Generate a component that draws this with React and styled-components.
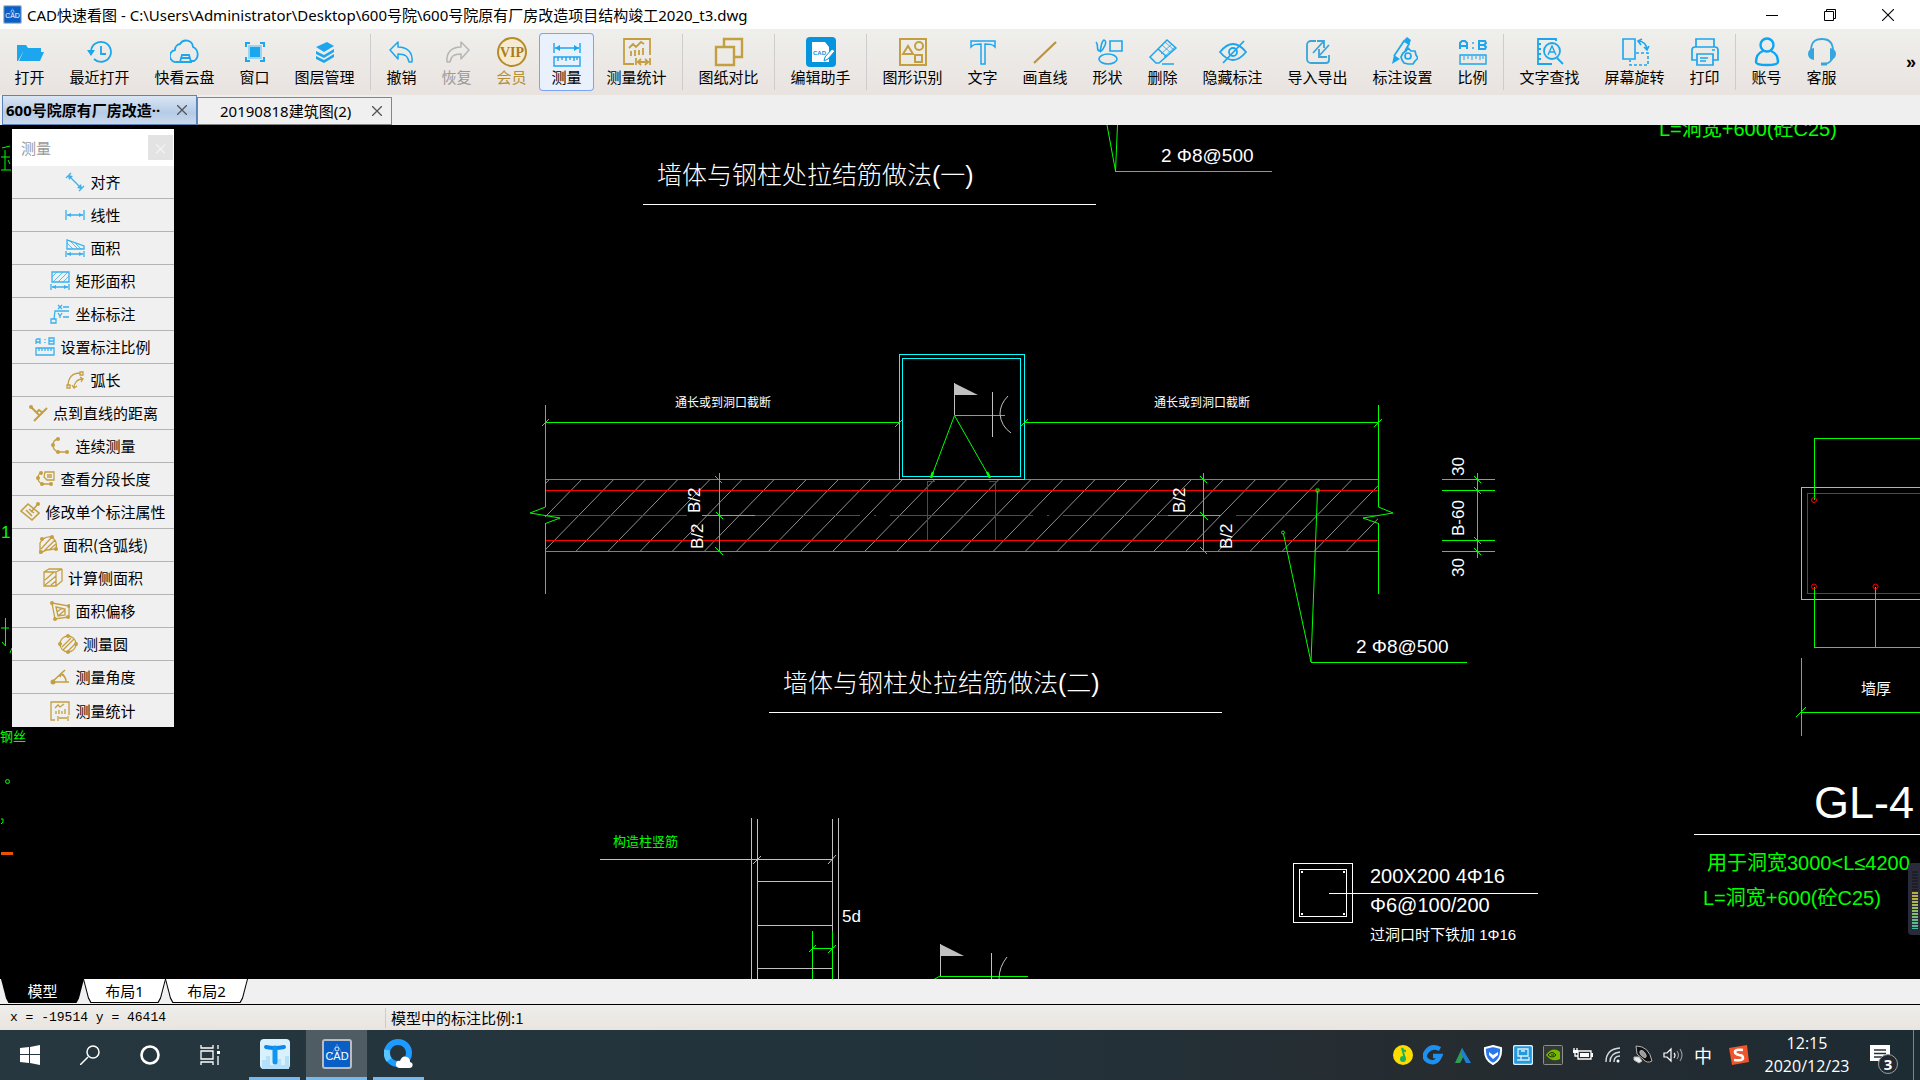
import React from "react";
import styled, { createGlobalStyle, css } from "styled-components";

const BLUE = "#1ba6ee";
const GOLD = "#c49f42";
const UI_FONT = '"Noto Sans CJK SC", "Noto Sans", sans-serif';
const WIN_FONT = '"Noto Sans", "Noto Sans CJK SC", sans-serif';
const CAD_FONT = '"Liberation Sans", "Noto Sans CJK SC", sans-serif';

const GlobalStyle = createGlobalStyle`
  * { box-sizing: border-box; }
  body { margin: 0; background: #000; font-family: ${UI_FONT}; color: #000; }
  button { border: 0; padding: 0; margin: 0; background: none; color: inherit; font: inherit; white-space: nowrap; }
  svg { display: block; flex: none; }
`;

const Window = styled.div`
  display: flex;
  flex-direction: column;
  height: 100vh;
  overflow: hidden;
`;

/* ---------- title bar ---------- */
const TitleBar = styled.header`
  display: flex;
  align-items: center;
  gap: 5px;
  flex: none;
  height: 29px;
  padding: 0 3px;
  background: #fff;
`;
const Title = styled.h1`
  flex: 1;
  margin: 0;
  font: 400 15px/24px ${WIN_FONT};
  white-space: nowrap;
`;
const Caption = styled.div`
  display: flex;
`;
const CaptionButton = styled.button`
  display: grid;
  place-items: center;
  width: 58px;
  height: 29px;
`;

/* ---------- toolbar ---------- */
const Toolbar = styled.nav`
  display: flex;
  align-items: center;
  flex: none;
  height: 66px;
  padding: 0 1px 0 2px;
  background: linear-gradient(#efefeb, #e9e3e0);
`;
const Tool = styled.button`
  display: flex;
  flex-direction: column;
  align-items: center;
  gap: 1px;
  flex: none;
  width: ${(p) => p.$chars * 15 + 25}px;
  height: 58px;
  padding-top: 4px;
  border-radius: 4px;
  font-size: 15px;
  line-height: 18px;
  color: ${(p) => p.$tone || "#000"};
  ${(p) =>
    p.$active &&
    css`
      background: #e9f1fd;
      box-shadow: inset 0 0 0 1px #7ba4f5;
    `}
`;
const Divider = styled.span`
  flex: none;
  width: 1px;
  height: 56px;
  margin: 0 3px;
  background: #cdcdcd;
`;
const More = styled.button`
  margin-left: auto;
  padding: 0 3px;
  font: 700 18px/24px ${CAD_FONT};
`;

/* ---------- document tabs ---------- */
const TabStrip = styled.div`
  display: flex;
  align-items: flex-end;
  flex: none;
  height: 30px;
  padding-left: 2px;
  background: #efefef;
`;
const DocTab = styled.div`
  display: flex;
  align-items: center;
  justify-content: space-between;
  width: 195px;
  height: ${(p) => (p.$active ? 30 : 28)}px;
  padding: 0 8px 0 ${(p) => (p.$active ? 3 : 22)}px;
  border: 1px solid ${(p) => (p.$active ? "#5d83b8" : "#848484")};
  background: ${(p) => (p.$active ? "linear-gradient(#dbe6f3, #b5cbe6 60%, #cbdaec)" : "#f0f0f0")};
  font: ${(p) => (p.$active ? 700 : 400)} 15px/24px ${WIN_FONT};
`;
const TabName = styled.button`
  flex: none;
`;
const TabClose = styled.button`
  display: grid;
  place-items: center;
  width: 12px;
  height: 18px;
`;

/* ---------- drawing area ---------- */
const Canvas = styled.main`
  position: relative;
  flex: 1;
  min-height: 0;
  overflow: hidden;
  background: #000;
`;
const Sheet = styled.svg`
  width: 100%;
  height: 100%;
  font-family: ${CAD_FONT};
`;
const Palette = styled.section`
  position: absolute;
  left: 12px;
  top: 4px;
  width: 162px;
  background: #f0f0f0;
`;
const PaletteHead = styled.div`
  display: flex;
  align-items: center;
  justify-content: space-between;
  height: 37px;
  padding: 0 1px 0 9px;
  background: #fff;
  color: #999;
  font-size: 15px;
`;
const PaletteClose = styled.button`
  width: 25px;
  height: 25px;
  background: #e3e3e3;
  color: #f6f6f6;
  font-size: 15px;
  line-height: 20px;
`;
const PaletteRow = styled.button`
  display: flex;
  align-items: center;
  justify-content: center;
  gap: 5px;
  width: 100%;
  height: 33px;
  border-bottom: 1px solid #b4b4b4;
  font-size: 15px;
  line-height: 18px;
  &:last-child { border-bottom: 0; }
`;
const Gauge = styled.div`
  position: absolute;
  right: 0;
  top: 738px;
  width: 12px;
  height: 72px;
  padding: 8px 2px 6px 4px;
  border-radius: 4px 0 0 4px;
  background: rgba(48, 50, 68, 0.85);
`;
const GaugeBars = styled.div`
  height: 100%;
  background:
    repeating-linear-gradient(transparent 0 2px, #2a2c3a 2px 3px),
    linear-gradient(#1d1e28 34%, #c9a634 34%, #a5bd55 60%, #43b8a0);
`;

/* ---------- layout tabs and status ---------- */
const LayoutStrip = styled.div`
  display: flex;
  align-items: flex-start;
  flex: none;
  height: 26px;
  padding-left: 1px;
  border-bottom: 1px solid #000;
  background: #f0f0f0;
`;
const LayoutTab = styled.button`
  position: relative;
  isolation: isolate;
  width: 83px;
  height: 24px;
  margin-right: -1px;
  z-index: ${(p) => (p.$active ? 1 : 0)};
  background: #000;
  color: ${(p) => (p.$active ? "#fff" : "#000")};
  clip-path: polygon(0 0, 100% 0, 94% 80%, 91% 100%, 9% 100%, 6% 80%);
  font: 400 15px/24px ${WIN_FONT};
  &::before {
    content: "";
    position: absolute;
    inset: 0 1px 1px;
    z-index: -1;
    background: ${(p) => (p.$active ? "#000" : "#fff")};
    clip-path: polygon(0 0, 100% 0, 94% 80%, 91% 100%, 9% 100%, 6% 80%);
  }
`;
const StatusBar = styled.footer`
  display: flex;
  align-items: center;
  flex: none;
  height: 25px;
  padding-left: 10px;
  background: linear-gradient(#efeeea, #e9e4e0);
  font-size: 15px;
  line-height: 20px;
`;
const Coordinates = styled.span`
  width: 376px;
  border-right: 1px solid #ccc;
  font: 400 13px/20px "Liberation Mono", monospace;
`;
const ScaleNote = styled.span`
  padding-left: 5px;
`;

/* ---------- task bar ---------- */
const TaskBar = styled.div`
  display: flex;
  align-items: stretch;
  justify-content: space-between;
  flex: none;
  height: 50px;
  background: linear-gradient(90deg, #263740, #22323b 50%, #262c30 75%, #1d2b33);
  color: #fff;
`;
const TaskGroup = styled.div`
  display: flex;
  align-items: stretch;
`;
const ShellButton = styled.button`
  display: grid;
  place-items: center;
  width: 60px;
`;
const Apps = styled.div`
  display: flex;
  gap: 6px;
  margin-left: 9px;
`;
const AppButton = styled.button`
  display: grid;
  place-items: center;
  width: ${(p) => (p.$active ? 61 : 51)}px;
  border-bottom: 3px solid #76b9ed;
  background: ${(p) => (p.$active ? "#4f5c64" : "transparent")};
`;
const Tray = styled.div`
  display: flex;
  align-items: center;
`;
const TrayButton = styled.button`
  display: grid;
  place-items: center;
  width: 30px;
  height: 50px;
  font-size: 18px;
`;
const Clock = styled.button`
  width: 98px;
  margin-left: 4px;
  font: 400 16px/23px "Open Sans", sans-serif;
  text-align: center;
`;
const InputMethod = styled(TrayButton)`
  margin-left: 6px;
`;
const Notices = styled.button`
  position: relative;
  display: grid;
  place-items: center;
  width: 58px;
  height: 50px;
  margin-right: 6px;
  padding-right: 10px;
  border-right: 1px solid #78838a;
`;
const Badge = styled.span`
  position: absolute;
  left: 22px;
  top: 24px;
  width: 20px;
  height: 20px;
  border: 1px solid #9aa0a4;
  border-radius: 50%;
  background: #23292e;
  font: 700 15px/18px ${WIN_FONT};
`;

/* ---------- icons ---------- */
const Icon = ({ size = 30, box = 30, color = BLUE, w = 2, children }) => (
  <svg width={size} height={size} viewBox={`0 0 ${box} ${box}`} fill="none" stroke={color} strokeWidth={w} aria-hidden="true">
    {children}
  </svg>
);
const RulerTicks = () => <path d="M6 19v4M10 19v3M14 19v4M18 19v3M22 19v4M25 19v3" strokeWidth="1" />;

const toolArt = {
  open: (
    <Icon>
      <path d="M2 24V8h9l2 3h13v4H8L3 24z" fill={BLUE} stroke="none" />
      <path d="M8 15h21l-4 9H4z" fill={BLUE} stroke="none" />
    </Icon>
  ),
  recent: (
    <Icon w={1.8}>
      <path d="M6 14A10 10 0 1 1 9 22M16 9v8h5" />
      <path d="M2 13h8l-4 6z" fill={BLUE} stroke="none" />
    </Icon>
  ),
  cloud: (
    <Icon w={1.8}>
      <path d="M9 25H7a6 6 0 0 1-2-12 6 6 0 0 1 5-6 7 7 0 0 1 13 3 8 8 0 0 1 1 14h-3M10 25l2-7h7l2 7zM11 21h9" />
    </Icon>
  ),
  window: (
    <Icon w={2}>
      <path d="M6 10V6h4M20 6h4v4M24 20v4h-4M10 24H6v-4" />
      <path d="M9 9h12v12H9z" fill={BLUE} stroke="#9bd5f4" />
    </Icon>
  ),
  layers: (
    <Icon>
      <path d="M6 10l11-5 7 4-10 6zM6 14l8 4 10-6v3l-10 6-8-4zM6 19l8 4 10-6v3l-10 6-8-4z" fill={BLUE} stroke="none" />
    </Icon>
  ),
  undo: (
    <Icon w={1.5}>
      <path d="M3 13l8-8v5c9 0 15 5 14 15h-3c-1-6-4-8-11-8v5z" strokeLinejoin="round" />
    </Icon>
  ),
  redo: (
    <Icon w={1.5} color="#b5b5b5">
      <path d="M27 13l-8-8v5C10 10 4 15 5 25h3c1-6 4-8 11-8v5z" strokeLinejoin="round" />
    </Icon>
  ),
  vip: (
    <Icon color="#b68b28">
      <circle cx="15" cy="15" r="14" fill="#f6ead0" />
      <text x="15" y="20" textAnchor="middle" fontFamily="Liberation Serif, serif" fontWeight="700" fontSize="14" fill="#a87c1c" stroke="none">VIP</text>
    </Icon>
  ),
  measure: (
    <Icon w={1.4}>
      <path d="M2 6v10M28 6v10M3 11h24M2 20h26v9H2zM6 20v4M10 20v3M14 20v4M18 20v3M22 20v4M25 20v3" />
      <path d="M3 11l5-3v6zM27 11l-5-3v6z" fill={BLUE} stroke="none" />
    </Icon>
  ),
  stats: (
    <Icon color={GOLD}>
      <path d="M12 27H2V2h26v16M7 11l4-4 3 3 5-5 3 2M9 19v-5M13 19v-6M17 18v-5M21 18v-7M14 21v7M28 21v7M15 25h12M19 22l-3 3 3 3M23 22l3 3-3 3" strokeWidth="1.8" />
    </Icon>
  ),
  compare: (
    <Icon color={GOLD} w={2.4}>
      <path d="M10 10V2h18v18h-8M2 10h18v18H2z" />
    </Icon>
  ),
  assistant: (
    <Icon>
      <rect width="30" height="30" rx="4" fill="#0794df" stroke="none" />
      <path d="M6 5h13l4 5v15H6z" fill="#fff" stroke="none" />
      <text x="7" y="18" fontFamily="Liberation Sans, sans-serif" fontSize="6" fontWeight="700" fill="#0794df" stroke="none">CAD</text>
      <path d="M18 24l1-4 7-8 3 2-7 8z" fill="#fff" stroke="#0794df" strokeWidth="1" />
    </Icon>
  ),
  detect: (
    <Icon color={GOLD}>
      <path d="M2 2h26v26H2zM5 17l5-8 5 8zM17 18h7v7h-7z" />
      <circle cx="21" cy="9" r="4" />
    </Icon>
  ),
  text: (
    <Icon w={1.5}>
      <path d="M3 4h24v6c-3-3-5-3-10-3v20h-4V7C8 7 6 7 3 10z" />
    </Icon>
  ),
  line: (
    <Icon color="#bb923f">
      <path d="M4 26L26 5" strokeWidth="2.2" />
    </Icon>
  ),
  shapes: (
    <Icon w={1.6}>
      <path d="M17 4h12v10H17zM3 5c3 3 0 8 3 9 3 0 1-9 5-11 4 1 0 9-4 12" />
      <ellipse cx="15" cy="22" rx="9" ry="5" />
    </Icon>
  ),
  erase: (
    <Icon w={1.5}>
      <path d="M2 20L19 3l9 8-17 15H8zM10 12l9 8M14 27h12" />
      <path d="M14 8l9 8M17 5l9 8M24 7L13 17M27 10L16 20" strokeWidth="0.8" />
    </Icon>
  ),
  hide: (
    <Icon w={1.8}>
      <path d="M2 15q13-16 26 0-13 16-26 0zM5 26L26 4" />
      <circle cx="15" cy="15" r="4" />
    </Icon>
  ),
  transfer: (
    <Icon w={1.8} color="#3aa5da">
      <path d="M13 4H8a4 4 0 0 0-4 4v14a4 4 0 0 0 4 4h15a3 3 0 0 0 3-3v-5M10 16L20 5M14 4h7v7M26 8L16 19M16 12v8h8" />
    </Icon>
  ),
  dimset: (
    <Icon w={1.7}>
      <path d="M6 19L16 4l5 3-4 7" />
      <path d="M4 27l2-9 6 4zM16 3l3-3 4 3-2 5z" fill={BLUE} stroke="none" />
      <path d="M20 11l3 3 4 0 1 4 2 3-3 3-2 3-5 0-4-1-2-3-1-3 2-4 3-2z" strokeLinejoin="round" />
      <circle cx="20" cy="19" r="3" />
    </Icon>
  ),
  ratio: (
    <Icon w={1.4}>
      <path d="M2 12V6l2-2h3l2 2v6M2 9h7M21 4v8h6l1-2-2-2 2-2-1-2zM21 8h5" strokeWidth="2" />
      <path d="M2 18h26v9H2zM15 5v2M15 10v2" />
      <RulerTicks />
    </Icon>
  ),
  find: (
    <Icon w={1.8}>
      <path d="M21 4V2H3v25h14M3 7h3M3 12h3M3 17h3M3 22h3M22 21l6 6" />
      <circle cx="17" cy="14" r="8" />
      <path d="M13 18l4-9 4 9M14 15h6" strokeWidth="1.4" />
    </Icon>
  ),
  rotate: (
    <Icon w={1.6}>
      <path d="M3 2h12v20H3zM19 4q7 1 8 8M22 2l-4 2 3 4M24 10l3 3 2-4" />
      <path d="M16 16h12v12H10v-5" strokeDasharray="3 2" />
    </Icon>
  ),
  print: (
    <Icon w={1.7}>
      <path d="M6 10V2h18v8M7 23H2V13q0-3 3-3h20q3 0 3 3v10h-5M7 17h16v11H7zM10 21h8M10 24h6M22 13h3" />
    </Icon>
  ),
  account: (
    <Icon w={2.4} color="#0aa5f5">
      <circle cx="15" cy="8" r="6.500" />
      <path d="M11 14c-5 2-7 6-7 11q0 3 11 3t11-3c0-5-2-9-7-11" />
    </Icon>
  ),
  service: (
    <Icon w={1.8} color="#36a6de">
      <path d="M4 14C4 5 8 2 15 2s11 3 11 12v6q-2 6-8 7" />
      <path d="M7 11v12q-6-1-6-6t6-6zM23 11v12q6-1 6-6t-6-6z" fill="#36a6de" stroke="none" />
      <path d="M14 27h6" strokeWidth="3" />
    </Icon>
  ),
};

const tools = [
  ["打开", "open"], ["最近打开", "recent"], ["快看云盘", "cloud"], ["窗口", "window"], ["图层管理", "layers"], null,
  ["撤销", "undo"], ["恢复", "redo", "#999"], ["会员", "vip", "#b78f35"], ["测量", "measure"], ["测量统计", "stats"], null,
  ["图纸对比", "compare"], null, ["编辑助手", "assistant"], null,
  ["图形识别", "detect"], ["文字", "text"], ["画直线", "line"], ["形状", "shapes"], ["删除", "erase"], ["隐藏标注", "hide"],
  ["导入导出", "transfer"], ["标注设置", "dimset"], ["比例", "ratio"], null,
  ["文字查找", "find"], ["屏幕旋转", "rotate"], ["打印", "print"], null, ["账号", "account"], ["客服", "service"],
];

const Small = ({ gold, children }) => (
  <Icon size={20} box={20} w={1.3} color={gold ? GOLD : "#38b0ec"}>{children}</Icon>
);
const dot = (x, y, r = 2) => <circle cx={x} cy={y} r={r} fill={GOLD} stroke="none" />;
const Span = () => (
  <>
    <path d="M1 13v6M19 13v6M2 16h16" />
    <path d="M2 16l4-2v4zM18 16l-4-2v4z" fill="#38b0ec" stroke="none" />
  </>
);

const paletteRows = [
  ["对齐", <Small><path d="M1 6l5-5M14 19l5-5M4 4l12 12" /><path d="M3 3l5 1-4 4zM17 17l-1-5-4 4z" fill="#38b0ec" stroke="none" /></Small>],
  ["线性", <Small><path d="M1 5v10M19 5v10M2 10h16" /><path d="M2 10l4-2v4zM18 10l-4-2v4z" fill="#38b0ec" stroke="none" /></Small>],
  ["面积", <Small><path d="M2 2v9h17V8z" /><path d="M2 5l6 6M5 3l8 8M10 5l6 6" strokeWidth="0.8" /><Span /></Small>],
  ["矩形面积", <Small><path d="M2 1h17v10H2z" /><path d="M2 6l5-5M3 11L13 1M8 11L18 1M13 11l6-6" strokeWidth="0.8" /><Span /></Small>],
  ["坐标标注", <Small><path d="M1 15h5v4H1zM4 15l1-8h14M8 1l4 4M12 1L8 5M13 3h6M8 9l2 3 2-3M10 12v2M13 13h6" /></Small>],
  ["设置标注比例", <Small><path d="M1 7V3l1-1h3v5M1 5h4M14 1h5v6h-5zM14 4h5M10 2v1M10 5v1M1 11h18v7H1zM4 11v3M7 11v3M10 11v3M13 11v3M16 11v3" /></Small>],
  ["弧长", <Small gold><path d="M3 16C3 8 7 3 15 3M9 18c0-5 3-9 9-9M2 15h3v3H2zM15 2h3v3h-3zM15 7l3 2-2 3M7 15l2 3 3-2" /></Small>],
  ["点到直线的距离", <Small gold>{dot(3, 4)}<path d="M3 4l8 8M6 18L19 5M8 10l3-3 4 3" strokeWidth="2" /></Small>],
  ["连续测量", <Small gold>{dot(8, 3)}{dot(3, 9)}{dot(8, 16)}{dot(17, 16)}<path d="M8 3Q3 4 3 9t5 7h9" /></Small>],
  ["查看分段长度", <Small gold>{dot(6, 4)}{dot(3, 9)}{dot(7, 15)}{dot(16, 15)}<path d="M6 4Q3 5 3 9t4 6h9M10 3h9v8h-7l-3-3zM12 6h5M12 8h5" /></Small>],
  ["修改单个标注属性", <Small gold><path d="M1 9l7-7 11 9-7 7zM6 8l6 6M9 7l5 4M11 10l7-8" strokeWidth="1.6" />{dot(18, 2)}</Small>],
  ["面积(含弧线)", <Small gold><path d="M2 18V8q4-7 11-6 7 3 5 12l-9 1zM3 14L13 3M6 16L17 5M11 15l7-6" />{dot(3, 17)}{dot(18, 14)}{dot(4, 4)}{dot(14, 2)}</Small>],
  ["计算侧面积", <Small gold><path d="M1 4h12v14H1zM1 4l5-3h13l-6 3M19 1v12l-6 5M2 12l9-8M2 17l11-9M8 17l5-4" /></Small>],
  ["面积偏移", <Small gold><path d="M2 2l17 3v11L5 18zM6 6l9 2v6l-7 1zM7 11l5-4M8 15l7-6" />{dot(2, 2)}{dot(19, 5)}{dot(18, 16)}{dot(5, 18)}</Small>],
  ["测量圆", <Small gold><circle cx="10" cy="10" r="8" /><path d="M4 13l9-9M5 16L16 5M9 18l8-8" />{dot(10, 2)}{dot(2, 10)}{dot(18, 10)}{dot(10, 18)}</Small>],
  ["测量角度", <Small gold><path d="M2 15h17M2 15L15 3M11 7q5 2 5 8M14 8l-3-1-1 3" strokeWidth="1.6" />{dot(3, 15, 2.5)}</Small>],
  ["测量统计", <Small gold><path d="M5 19H1V1h18v13M5 7l3-3 2 2 4-3M6 13v-3M9 13V9M12 13v-3M15 13V8M8 15v5M18 15v5M9 17h8" /></Small>],
];

/* ---------- sheet contents ---------- */
const green = "#00ff00";
const red = "#ff0000";
const cyan = "#00ffff";
const grey = "#c0c0c0";

const Note = ({ x, y, size, fill = "#fff", up, children }) => (
  <text x={x} y={y} fontSize={size} fontWeight={size > 20 ? 300 : 400} fill={fill} transform={up ? `rotate(-90 ${x} ${y})` : undefined}>{children}</text>
);
const hatch = Array.from({ length: 29 }, (_, i) => 549.5 + i * 32.1);

const Drawing = () => (
  <Sheet viewBox="0 125 1920 854" preserveAspectRatio="xMinYMin slice" fill="none" strokeWidth="1" role="img" aria-label="墙体与钢柱处拉结筋做法">
    <defs>
      <clipPath id="wall"><rect x="545" y="479" width="833" height="73" /></clipPath>
    </defs>

    <g clipPath="url(#wall)" stroke="#909090">
      {hatch.map((x) => <path key={x} d={`M${x} 479.500l-72 74`} />)}
    </g>
    <path d="M545 479.500H1378M545 551.500H1378" stroke="#808080" shapeRendering="crispEdges" />

    <g stroke={red} shapeRendering="crispEdges">
      <path d="M545 490.500H1378M545 540.500H1378M547 515.500H687M755 515.500H860M874 515.500h2M890 515.500H1033M1047 515.500h2M1063 515.500H1168M1236 515.500H1376" />
      <path d="M935 481.500h-7.500V540M989 481.500h6.500V540" />
      <path d="M1920 493.500H1807.500V593.500H1920" />
    </g>
    <g stroke={cyan} shapeRendering="crispEdges">
      <path d="M899.500 354.500h125v125h-125zM902.500 358.500h118v118h-118zM1920 487.500H1801.500V599.500H1920" />
    </g>

    <g stroke={green} shapeRendering="crispEdges">
      <path d="M1115 171.500H1272M545.500 422.500H899M1025 422.500H1378M955 415.500h50M1311 662.500H1467" />
      <path d="M545.500 405V507M545.500 523V594M1378.500 405V507M1378.500 523V594" />
      <path d="M719.500 473V551M702 515.500h53M1203.500 473V551M1168 515.500h53" />
      <path d="M1477.500 473V558M1442 479.500h53M1442 490.500h53M1442 540.500h53M1442 551.500h53" />
      <path d="M1814.500 500V438.500H1920M1814.500 587V647.500H1920M1875.500 587V647M1801.500 658V736M1801 712.500H1920" />
      <path d="M812.500 931V979M832.500 931V979M812 948.500h20M940 976.500h88" />
    </g>
    <g stroke={green}>
      <path d="M1107 125L1115.500 171L1117.500 125M954.500 415.500L931 478M954.500 415.500L990 478M1283.500 534L1311 662L1317.500 491" />
      <path d="M933 472l-2 6M987 472l3 6" strokeWidth="2.500" />
      <path d="M545.500 507L530 513L560 518L545.500 523.500M1378.500 507L1393 513L1363 518L1378.500 523.500" />
      <path d="M542 426l7-7M895 427l7-7M1021 426l7-7M1374 427l8-8" />
      <path d="M715 476l7 7M716 512l7 7M715 547l8 8M1200 476l7 7M1200 512l8 8M1200 547l7 7" />
      <path d="M1474 476l7 7M1474 487l7 7M1474 537l7 7M1474 548l7 7M1796 717l10-10M809 952l7-7M828 953l8-8M940 976l-7 4" />
      <circle cx="1283" cy="532.500" r="1.500" />
      <path d="M1316 489h3v3h-3z" />
    </g>
    <g stroke={red}>
      <circle cx="1814" cy="500" r="2.500" />
      <circle cx="1814" cy="586.500" r="2.500" />
      <circle cx="1875.500" cy="586.500" r="2.500" />
    </g>

    <g stroke={grey}>
      <path d="M954.500 383V415M992.500 392V437M1008 396Q1000 404 1000 414Q1001 426 1011 433M940.500 944V976M991.500 953V979M1007 957Q999 967 999 979" />
      <path d="M954 383L978 395H954zM940 944L964 956H940z" fill={grey} stroke="none" />
      <path d="M600 859.500H833M751.500 818V979M757.500 819V979M832.500 819V931M838.500 818V979M757 881.500h75M757 925.500h75M757 968.500h75M753 864l8-8M828 864l8-9" />
    </g>
    <g stroke="#fff" shapeRendering="crispEdges">
      <path d="M643 204.500H1096M769 712.500H1222M1694 834.500H1920M1329 893.500H1538" />
      <path d="M1293.500 863.500h59v59h-59zM1299.500 869.500h47v47h-47z" />
      <path d="M1301 872h2M1343 872h2M1301 914h2M1343 914h2" strokeWidth="2" />
    </g>

    <Note x={657} y={184} size={25}>墙体与钢柱处拉结筋做法(一)</Note>
    <Note x={783} y={692} size={25}>墙体与钢柱处拉结筋做法(二)</Note>
    <Note x={1161} y={162} size={19}>2 Φ8@500</Note>
    <Note x={1356} y={653} size={19}>2 Φ8@500</Note>
    <Note x={675} y={407} size={12}>通长或到洞口截断</Note>
    <Note x={1154} y={407} size={12}>通长或到洞口截断</Note>
    <Note x={700} y={513} size={17} up>B/2</Note>
    <Note x={703} y={549} size={17} up>B/2</Note>
    <Note x={1185} y={513} size={17} up>B/2</Note>
    <Note x={1232} y={549} size={17} up>B/2</Note>
    <Note x={1464} y={476} size={17} up>30</Note>
    <Note x={1464} y={536} size={17} up>B-60</Note>
    <Note x={1464} y={577} size={17} up>30</Note>
    <Note x={1861} y={694} size={15}>墙厚</Note>
    <Note x={1814} y={818} size={45}>GL-4</Note>
    <Note x={1707} y={870} size={20} fill={green}>用于洞宽3000&lt;L≤4200</Note>
    <Note x={1703} y={905} size={20} fill={green}>L=洞宽+600(砼C25)</Note>
    <Note x={1659} y={136} size={20} fill={green}>L=洞宽+600(砼C25)</Note>
    <Note x={613} y={846} size={13} fill={green}>构造柱竖筋</Note>
    <Note x={842} y={922} size={17}>5d</Note>
    <Note x={1370} y={883} size={20}>200X200 4Φ16</Note>
    <Note x={1370} y={912} size={20}>Φ6@100/200</Note>
    <Note x={1370} y={940} size={15}>过洞口时下铁加 1Φ16</Note>

    <g stroke={green}>
      <path d="M2 148l8-2M5 150v20M1 157h9M1 170h10M8 160l2 4" />
      <path d="M1 628h8M5.500 618V646L2 642M12 648l-2 5" />
      <circle cx="7.500" cy="781.500" r="2" />
      <path d="M1 819h2v3l-2 2" />
    </g>
    <Note x={1} y={538} size={17} fill={green}>1</Note>
    <Note x={0} y={741} size={13} fill={green}>钢丝</Note>
    <path d="M1 852h12v3H1z" fill="#e85200" />
  </Sheet>
);

/* ---------- task bar art ---------- */
const CadLogo = ({ size }) => (
  <Icon size={size} color="#b9bcc2" w={2}>
    <rect x="1" y="1" width="28" height="28" rx="2" fill="#0a5fc4" />
    <path d="M7 20L15 5l8 15" stroke="#3b8ae0" strokeWidth="1" />
    <circle cx="15" cy="10" r="2" stroke="#d7e6f8" strokeWidth="1" />
    <text x="15" y="21" textAnchor="middle" fontFamily="Liberation Sans, sans-serif" fontSize="11" fill="#fff" stroke="none">CAD</text>
  </Icon>
);

const trayItems = [
  ["音乐", <Icon size={20} box={20}><circle cx="10" cy="10" r="10" fill="#ffdc00" stroke="none" /><path d="M9 3q1 3 4 3M9 3l3 11" stroke="#1bb35f" strokeWidth="2" /><circle cx="10" cy="14" r="3" fill="#1bb35f" stroke="none" /></Icon>],
  ["浏览器", <Icon size={20} box={20} color="#1e90f0" w={4.5}><path d="M17 4Q9 0 4 6t1 10q8 4 12-5h-7" /></Icon>],
  ["设计", <Icon size={20} box={20}><path d="M2 18L9 3l3 6-5 9z" fill="#2f9e56" stroke="none" /><path d="M9 3l9 15h-5L8 8z" fill="#1f7fd6" stroke="none" /></Icon>],
  ["安全", <Icon size={20} box={20} color="#2a76ea"><path d="M10 1l8 2q1 12-8 16Q1 15 2 3z" fill="#2a76ea" stroke="#fff" strokeWidth="2" /><path d="M6 7v3l4 4 5-4V7l-5 3z" fill="#fff" stroke="none" /></Icon>],
  ["电脑", <Icon size={20} box={20} color="#d9f0ff" w={1.3}><rect x="0.500" y="0.500" width="19" height="19" rx="2" fill="#2499dc" /><path d="M5 4h10v7H5zM8 11v4h8v-3M4 15h8M8 6h4" /></Icon>],
  ["显卡", <Icon size={20} box={20} color="#8a8f8a" w={1}><rect x="0.500" y="0.500" width="19" height="19" rx="1" fill="#333a33" /><path d="M3 10q7-9 14-3v7q-8 4-14-4z" fill="#76b900" stroke="none" /><path d="M5 10q4-5 8 0-4 4-8 0zM8 10h3" stroke="#1d2d10" /></Icon>],
  ["电源", <Icon size={20} box={20} color="#fff" w={1.3}><path d="M5 6h13v8H5z" /><path d="M7 8h9v4H7zM18 8h2v4h-2zM0 5h5v3H0z" fill="#fff" stroke="none" /><path d="M1 3v2M4 3v2M2 8v3h3" /></Icon>],
  ["网络", <Icon size={20} box={20} color="#d5dade" w={1.4}><path d="M3 17Q3 4 17 3M7 17q0-9 10-10M11 17q0-6 6-6" /><circle cx="15" cy="16" r="1.500" fill="#fff" stroke="none" /></Icon>],
  ["音响", <Icon size={20} box={20} color="#b5b5b5" w={1}><path d="M3 1q13 0 16 15-5 3-9-2L4 9z" fill="#111" /><ellipse cx="10" cy="9" rx="2" ry="4" fill="#999" transform="rotate(-40 10 9)" /><path d="M1 12h5l3 4-3 2-5-3z" fill="#eee" /></Icon>],
  ["音量", <Icon size={20} box={20} color="#fff" w={1.2}><path d="M1 8h3l4-4v12l-4-4H1zM11 8q2 2 0 5" /><path d="M14 6q3 4 0 8M17 4q4 6 0 12" stroke="#8d979d" /></Icon>],
];

export default function App() {
  return (
    <Window>
      <GlobalStyle />
      <TitleBar>
        <CadLogo size={19} />
        <Title>CAD快速看图 - C:\Users\Administrator\Desktop\600号院\600号院原有厂房改造项目结构竣工2020_t3.dwg</Title>
        <Caption>
          <CaptionButton aria-label="最小化"><Icon size={12} box={12} color="#000" w={1}><path d="M0 6.500h12" /></Icon></CaptionButton>
          <CaptionButton aria-label="还原"><Icon size={12} box={12} color="#000" w={1}><path d="M0.500 2.500h9v9h-9zM2.500 2V0.500h9v9H10" /></Icon></CaptionButton>
          <CaptionButton aria-label="关闭"><Icon size={12} box={12} color="#000" w={1.1}><path d="M0 0l12 12M12 0L0 12" /></Icon></CaptionButton>
        </Caption>
      </TitleBar>

      <Toolbar>
        {tools.map((t, i) =>
          t ? (
            <Tool key={t[0]} $chars={t[0].length} $tone={t[2]} $active={t[1] === "measure"}>
              {toolArt[t[1]]}
              <span>{t[0]}</span>
            </Tool>
          ) : (
            <Divider key={i} />
          )
        )}
        <More>»</More>
      </Toolbar>

      <TabStrip>
        {["600号院原有厂房改造··", "20190818建筑图(2)"].map((name, i) => (
          <DocTab key={name} $active={i === 0}>
            <TabName>{name}</TabName>
            <TabClose aria-label="关闭标签">
              <Icon size={10} box={10} color="#555" w={1.3}><path d="M0 0l10 10M10 0L0 10" /></Icon>
            </TabClose>
          </DocTab>
        ))}
      </TabStrip>

      <Canvas>
        <Drawing />
        <Palette>
          <PaletteHead>
            <span>测量</span>
            <PaletteClose aria-label="关闭测量">×</PaletteClose>
          </PaletteHead>
          <div>
            {paletteRows.map(([label, art]) => (
              <PaletteRow key={label}>{art}<span>{label}</span></PaletteRow>
            ))}
          </div>
        </Palette>
        <Gauge><GaugeBars /></Gauge>
      </Canvas>

      <LayoutStrip>
        <LayoutTab $active>模型</LayoutTab>
        <LayoutTab>布局1</LayoutTab>
        <LayoutTab>布局2</LayoutTab>
      </LayoutStrip>
      <StatusBar>
        <Coordinates>x = -19514 y = 46414</Coordinates>
        <ScaleNote>模型中的标注比例:1</ScaleNote>
      </StatusBar>

      <TaskBar>
        <TaskGroup>
          <ShellButton aria-label="开始">
            <Icon size={20} box={20}><path d="M0 3l9-1v7H0zM10 2l10-2v9H10zM0 10h9v8l-9-1zM10 10h10v10l-10-2z" fill="#fff" stroke="none" /></Icon>
          </ShellButton>
          <ShellButton aria-label="搜索">
            <Icon size={20} box={20} color="#fff" w={1.5}><circle cx="13" cy="7" r="6" /><path d="M8 12l-8 8" /></Icon>
          </ShellButton>
          <ShellButton aria-label="助手">
            <Icon size={20} box={20} color="#fff" w={2.6}><circle cx="10" cy="10" r="8.500" /></Icon>
          </ShellButton>
          <ShellButton aria-label="任务视图">
            <Icon size={20} box={20} color="#fff" w={1.3}><path d="M1 0v3h12V0M1 6h12v8H1zM1 20v-3h12v3M18 0v4M18 11v9" /><path d="M17 6h3v3h-3z" fill="#fff" stroke="none" /></Icon>
          </ShellButton>
          <Apps>
            <AppButton aria-label="T">
              <Icon>
                <rect width="30" height="30" rx="4" fill="#d9f0fd" stroke="none" />
                <path d="M2 30v-9h4v-4h4v9h6v-6h5v6h4v-9h4v13z" fill="#b5e0fa" stroke="none" />
                <path d="M6 8q9 2 18 0" stroke="#0e86ea" strokeWidth="4" strokeLinecap="round" />
                <path d="M15 9v14" stroke="#0e96f0" strokeWidth="5" strokeLinecap="round" />
              </Icon>
            </AppButton>
            <AppButton $active aria-label="CAD快速看图"><CadLogo size={30} /></AppButton>
            <AppButton aria-label="浏览器">
              <Icon>
                <circle cx="14" cy="14" r="11" stroke="#1e9bff" strokeWidth="6" />
                <path d="M5 21Q2 17 3 11" stroke="#58c6ff" strokeWidth="6" />
                <path d="M15 29q-4-1-3-5 1-3 4-2 2-6 7-4 3 1 3 5 4 1 2 5-1 1-3 1z" fill="#fff" stroke="none" />
              </Icon>
            </AppButton>
          </Apps>
        </TaskGroup>
        <Tray>
          {trayItems.map(([name, art]) => (
            <TrayButton key={name} aria-label={name}>{art}</TrayButton>
          ))}
          <TrayButton>中</TrayButton>
          <InputMethod aria-label="输入法">
            <Icon size={20} box={20}><path d="M0 3l18-3 2 17-17 3z" fill="#f0542a" stroke="none" /><path d="M14 5q-8-1-8 2 0 2 4 3 4 0 4 3 0 3-9 2" stroke="#fff" strokeWidth="2.600" /></Icon>
          </InputMethod>
          <Clock>12:15<br />2020/12/23</Clock>
          <Notices aria-label="通知">
            <Icon size={20} box={20} color="#263238" w={1.4}><path d="M0 0h20v16h-8v4l-4-4H0z" fill="#fff" stroke="none" /><path d="M4 5h12M4 8.500h12M4 12h8" /></Icon>
            <Badge>3</Badge>
          </Notices>
        </Tray>
      </TaskBar>
    </Window>
  );
}
